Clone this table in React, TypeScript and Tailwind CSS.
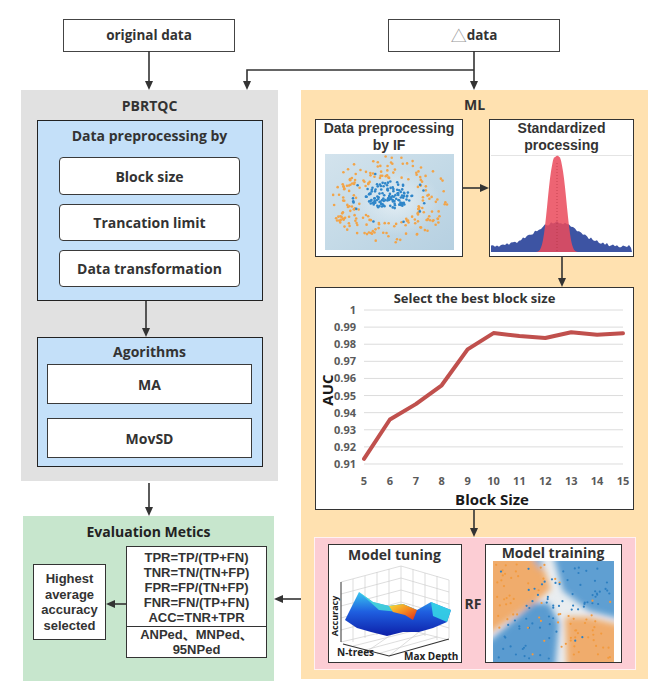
import React from "react";

function rng(seed: number) {
  let s = seed;
  return () => {
    s = (s + 0x6d2b79f5) | 0;
    let t = Math.imul(s ^ (s >>> 15), 1 | s);
    t = (t + Math.imul(t ^ (t >>> 7), 61 | t)) ^ t;
    return ((t ^ (t >>> 14)) >>> 0) / 4294967296;
  };
}

const font = "font-['Open_Sans','Noto_Sans','Noto_Sans_CJK_SC',sans-serif]";
const tight = "font-['Liberation_Sans','Noto_Sans_CJK_SC',sans-serif]";

// scatter plot of the isolation forest step
function ScatterIF() {
  const r = rng(11);
  const orange: number[][] = [];
  for (let i = 0; i < 200; i++) {
    const a = r() * Math.PI * 2;
    const rad = 0.5 + r() * 0.5;
    const x = 64 + Math.cos(a) * rad * 60;
    const y = 46 + Math.sin(a) * rad * 44;
    if (x > 2 && x < 127 && y > 2 && y < 94) orange.push([x, y]);
  }
  const blue: number[][] = [];
  for (let i = 0; i < 120; i++) {
    const a = r() * Math.PI * 2;
    const rad = Math.sqrt(r());
    blue.push([64 + Math.cos(a) * rad * 24, 41 + Math.sin(a) * rad * 14]);
  }
  for (let i = 0; i < 12; i++) {
    const a = r() * Math.PI * 2;
    blue.push([64 + Math.cos(a) * 36, 44 + Math.sin(a) * 26]);
  }
  return (
    <svg width="129" height="96" viewBox="0 0 129 96">
      <defs>
        <linearGradient id="ifbg" x1="0" y1="0" x2="1" y2="1">
          <stop offset="0" stopColor="#d3e3ed" />
          <stop offset="0.5" stopColor="#c4dae7" />
          <stop offset="1" stopColor="#b6d0e1" />
        </linearGradient>
        <radialGradient id="ifhl" cx="0.55" cy="0.5" r="0.35">
          <stop offset="0" stopColor="#e6eff5" stopOpacity="0.9" />
          <stop offset="1" stopColor="#e6eff5" stopOpacity="0" />
        </radialGradient>
      </defs>
      <rect width="129" height="96" fill="url(#ifbg)" />
      <rect width="129" height="96" fill="url(#ifhl)" />
      {orange.map((p, i) => (
        <circle key={"o" + i} cx={p[0]} cy={p[1]} r="1.3" fill="#f2a449" />
      ))}
      {blue.map((p, i) => (
        <circle key={"b" + i} cx={p[0]} cy={p[1]} r="1.3" fill="#2f86c9" />
      ))}
    </svg>
  );
}

// overlapping distributions
function Distributions() {
  const r = rng(5);
  const w = 141;
  const base = 97;
  let blue = `M0 ${base}`;
  for (let x = 0; x <= w; x += 2) {
    const d = (x - 66) / 32;
    const h = 24 * Math.exp(-d * d) + 4 + r() * 3;
    blue += ` L${x} ${base - h}`;
  }
  blue += ` L${w} ${base} Z`;
  let red = `M44 ${base}`;
  for (let x = 44; x <= 88; x += 1) {
    const d = (x - 66) / 11;
    const h = 95 * Math.exp(-Math.pow(Math.abs(d), 3));
    red += ` L${x} ${base - h - (Math.abs(d) < 0.4 ? r() * 1.5 : 0)}`;
  }
  red += ` L88 ${base} Z`;
  return (
    <svg width="141" height="99" viewBox="0 0 141 99">
      <line x1="0" y1="0.5" x2="141" y2="0.5" stroke="#e4e4e4" />
      <path d={blue} fill="#3d54a3" />
      <path d={red} fill="#ea4a5c" fillOpacity="0.86" />
      <line x1="66" y1="8" x2="66" y2="97" stroke="#b0303d" strokeWidth="0.6" strokeDasharray="1 2" />
    </svg>
  );
}

// AUC line chart
function AucChart() {
  const vals = [0.913, 0.936, 0.945, 0.956, 0.977, 0.9865, 0.9848, 0.9836, 0.987, 0.9856, 0.9864];
  const x0 = 48;
  const x1 = 307;
  const yAt = (v: number) => 21 + (1 - v) * 1711;
  const xAt = (i: number) => x0 + (i * (x1 - x0)) / 10;
  const ticks = [1, 0.99, 0.98, 0.97, 0.96, 0.95, 0.94, 0.93, 0.92, 0.91];
  const pts = vals.map((v, i) => `${xAt(i)},${yAt(v)}`).join(" ");
  return (
    <svg width="316" height="220" viewBox="0 0 316 220" className="absolute left-0 top-0">
      {ticks.map((t) => (
        <g key={t}>
          <line x1={x0} x2={x1} y1={yAt(t)} y2={yAt(t)} stroke="#dcdcdc" strokeWidth="1" />
          <text x="40" y={yAt(t) + 4} textAnchor="end" fontSize="11" fontWeight="700" fill="#5a5a5a" fontFamily="Open Sans, sans-serif">
            {t === 1 ? "1" : t.toFixed(2)}
          </text>
        </g>
      ))}
      {vals.map((_, i) => (
        <text key={i} x={xAt(i)} y="196" textAnchor="middle" fontSize="11" fontWeight="700" fill="#5a5a5a" fontFamily="Open Sans, sans-serif">
          {i + 5}
        </text>
      ))}
      <polyline points={pts} fill="none" stroke="#c0504d" strokeWidth="4" strokeLinejoin="round" strokeLinecap="round" />
      <text x="176" y="216" textAnchor="middle" fontSize="15" fontWeight="700" fill="#1a1a1a" fontFamily="Open Sans, sans-serif">
        Block Size
      </text>
      <text x="0" y="0" transform="translate(17 101) rotate(-90)" textAnchor="middle" fontSize="15" fontWeight="700" fill="#1a1a1a" fontFamily="Open Sans, sans-serif">
        AUC
      </text>
    </svg>
  );
}

// 3D surface of the grid search
function TuningSurface() {
  return (
    <svg width="132" height="98" viewBox="0 0 132 98">
      <defs>
        <linearGradient id="surf" x1="0" y1="0" x2="0" y2="1">
          <stop offset="0" stopColor="#39c6f0" />
          <stop offset="0.45" stopColor="#1f5fe0" />
          <stop offset="1" stopColor="#0d1fa8" />
        </linearGradient>
        <linearGradient id="hot" x1="0" y1="0" x2="1" y2="1">
          <stop offset="0" stopColor="#f5e23a" />
          <stop offset="0.5" stopColor="#f58a20" />
          <stop offset="1" stopColor="#e02a1c" />
        </linearGradient>
      </defs>
      <g stroke="#cfcfcf" strokeWidth="0.7" fill="none">
        <polyline points="12,18 72,2 120,16" />
        <polyline points="12,30 72,14 120,28" />
        <polyline points="12,42 72,26 120,40" />
        <polyline points="12,54 72,38 120,52" />
        <polyline points="12,66 72,50 120,64" />
        <line x1="24" y1="15" x2="24" y2="78" />
        <line x1="36" y1="12" x2="36" y2="74" />
        <line x1="48" y1="8" x2="48" y2="71" />
        <line x1="60" y1="5" x2="60" y2="68" />
        <line x1="72" y1="2" x2="72" y2="64" />
        <line x1="84" y1="5" x2="84" y2="68" />
        <line x1="96" y1="9" x2="96" y2="72" />
        <line x1="108" y1="12" x2="108" y2="76" />
        <line x1="120" y1="16" x2="120" y2="74" />
        <polyline points="12,78 72,64 120,76" />
        <line x1="24" y1="82" x2="84" y2="67" />
        <line x1="36" y1="86" x2="96" y2="70" />
        <line x1="48" y1="90" x2="108" y2="73" />
        <line x1="72" y1="64" x2="40" y2="86" />
        <line x1="90" y1="68" x2="60" y2="92" />
      </g>
      <line x1="12" y1="18" x2="12" y2="78" stroke="#333" strokeWidth="1" />
      <polyline points="14,80 60,92 120,75" fill="none" stroke="#333" strokeWidth="1.2" />
      <path d="M16 56 L30 28 L44 38 L60 42 L74 40 L88 46 L102 38 L122 46 L118 58 L104 64 L90 68 L74 68 L58 72 L42 68 L28 64 Z" fill="url(#surf)" />
      <path d="M30 28 L44 38 L60 42 L74 40 L88 46 L70 48 L50 46 Z" fill="#49e0d8" opacity="0.8" />
      <path d="M60 42 L74 40 L88 46 L84 56 L76 51 L64 48 Z" fill="url(#hot)" />
      <path d="M102 38 L122 46 L118 58 L104 52 Z" fill="#35d5e6" opacity="0.9" />
      <text x="0" y="0" transform="translate(9 52) rotate(-90)" textAnchor="middle" fontSize="9" fontWeight="700" fill="#222" fontFamily="Open Sans, sans-serif">
        Accuracy
      </text>
      <text x="8" y="92" fontSize="10" fontWeight="700" fill="#222" fontFamily="Open Sans, sans-serif">
        N-trees
      </text>
      <text x="75" y="96" fontSize="10" fontWeight="700" fill="#222" fontFamily="Open Sans, sans-serif">
        Max Depth
      </text>
    </svg>
  );
}

// random forest decision regions
function ForestRegions() {
  const r = rng(3);
  const dots: { x: number; y: number; c: string }[] = [];
  for (let i = 0; i < 150; i++) {
    const x = 3 + r() * 115;
    const y = 3 + r() * 95;
    const tl = y < 72 - 0.9 * x && x < 55;
    const br = x > 65 && y > 55 + (x - 95) * 0.3;
    const mix = r() < 0.15;
    let c = tl || br ? "#f29a3e" : "#2d7fc1";
    if (mix) c = c === "#2d7fc1" ? "#f29a3e" : "#2d7fc1";
    dots.push({ x, y, c });
  }
  return (
    <svg width="121" height="101" viewBox="0 0 121 101">
      <defs>
        <filter id="soft" x="-0.2" y="-0.2" width="1.4" height="1.4">
          <feGaussianBlur stdDeviation="3" />
        </filter>
        <clipPath id="rfclip">
          <rect width="121" height="101" />
        </clipPath>
      </defs>
      <g clipPath="url(#rfclip)">
        <rect width="121" height="101" fill="#e9edf0" />
        <g filter="url(#soft)">
          <polygon points="-6,-6 46,-6 58,28 46,38 -6,74" fill="#f0ac6c" />
          <polygon points="60,-6 127,-6 127,58 96,50 70,30" fill="#5f9fd2" />
          <polygon points="-6,82 40,42 56,42 66,62 62,107 -6,107" fill="#5a9bd0" />
          <polygon points="72,56 96,56 127,64 127,107 74,107" fill="#f0ac6c" />
          <polygon points="38,-6 50,-6 48,10" fill="#79b1da" />
        </g>
        {dots.map((d, i) => (
          <circle key={i} cx={d.x} cy={d.y} r="1.1" fill={d.c} />
        ))}
      </g>
    </svg>
  );
}

function Arrows() {
  const c = "#333";
  const down = (x: number, y: number) => `${x - 4},${y - 9} ${x + 4},${y - 9} ${x},${y}`;
  const right = (x: number, y: number) => `${x - 9},${y - 4} ${x - 9},${y + 4} ${x},${y}`;
  const left = (x: number, y: number) => `${x + 9},${y - 4} ${x + 9},${y + 4} ${x},${y}`;
  return (
    <svg width="669" height="700" className="absolute left-0 top-0 pointer-events-none z-10">
      <g stroke={c} strokeWidth="1.6" fill="none">
        <line x1="149" y1="51" x2="149" y2="82" />
        <line x1="474" y1="51" x2="474" y2="82" />
        <polyline points="474,70 247,70 247,82" />
        <line x1="146" y1="301" x2="146" y2="329" />
        <line x1="149" y1="483" x2="149" y2="508" />
        <line x1="463" y1="188" x2="481" y2="188" />
        <line x1="562" y1="257" x2="562" y2="279" />
        <line x1="474" y1="510" x2="474" y2="529" />
        <line x1="301" y1="599" x2="282" y2="599" />
        <line x1="126" y1="604" x2="114" y2="604" />
      </g>
      <g fill={c}>
        <polygon points={down(149, 90)} />
        <polygon points={down(474, 90)} />
        <polygon points={down(247, 90)} />
        <polygon points={down(146, 337)} />
        <polygon points={down(149, 516)} />
        <polygon points={right(489, 188)} />
        <polygon points={down(562, 287)} />
        <polygon points={down(474, 537)} />
        <polygon points={left(274, 599)} />
        <polygon points={left(106, 604)} />
      </g>
    </svg>
  );
}

export default function App() {
  const innerBox =
    "flex items-center justify-center bg-white border-[1.5px] border-[#3a3a3a] rounded-[4px] text-[14px] font-bold text-[#333]";
  const squareBox =
    "flex items-center justify-center bg-white border-[1.5px] border-[#3a3a3a] text-[14px] font-bold text-[#333]";
  return (
    <div className={`relative w-[669px] h-[700px] bg-white overflow-hidden ${font} text-[#262626]`}>
      {/* inputs */}
      <div className="absolute left-[63px] top-[19px] w-[172px] h-[33px] border-[1.5px] border-[#444] bg-white flex items-center justify-center text-[13.5px] font-bold text-[#333]">
        original data
      </div>
      <div className="absolute left-[388px] top-[19px] w-[172px] h-[33px] border-[1.5px] border-[#444] bg-white flex items-center justify-center text-[13.5px] font-bold text-[#333]">
        <span className="font-normal text-[#999] text-[16px] leading-none">△</span>data
      </div>

      {/* PBRTQC */}
      <div className="absolute left-[21px] top-[90px] w-[257px] h-[391px] bg-[#e1e1e1] flex flex-col items-center">
        <div className="h-[30px] flex items-center text-[14px] font-bold text-[#333]">PBRTQC</div>
        <div className="w-[226px] h-[181px] bg-[#c4e0f9] border-[1.5px] border-[#222] flex flex-col items-center">
          <div className="h-[28px] flex items-center text-[14px] font-bold text-[#333]">Data preprocessing by</div>
          <div className="flex flex-col gap-[9px] mt-[8px]">
            <div className={`${innerBox} w-[181px] h-[38px]`}>Block size</div>
            <div className={`${innerBox} w-[181px] h-[37px]`}>Trancation limit</div>
            <div className={`${innerBox} w-[181px] h-[37px]`}>Data transformation</div>
          </div>
        </div>
        <div className="mt-[36px] w-[226px] h-[130px] bg-[#c4e0f9] border-[1.5px] border-[#222] flex flex-col items-center">
          <div className="h-[26px] flex items-center text-[14px] font-bold text-[#333]">Agorithms</div>
          <div className="flex flex-col gap-[14px]">
            <div className={`${squareBox} w-[205px] h-[40px]`}>MA</div>
            <div className={`${squareBox} w-[205px] h-[40px]`}>MovSD</div>
          </div>
        </div>
      </div>

      {/* ML */}
      <div className="absolute left-[301px] top-[90px] w-[347px] h-[589px] bg-[#ffe1b0] flex flex-col items-center">
        <div className="h-[29px] flex items-center text-[14px] font-bold text-[#333]">ML</div>
        <div className="flex gap-[26px]">
          <div className="w-[148px] h-[138px] bg-white border-[1.5px] border-[#333] flex flex-col items-center">
            <div className={`${tight} text-[14px] font-bold leading-[17px] text-center text-[#333]`}>
              Data preprocessing
              <br />
              by IF
            </div>
            <div>
              <ScatterIF />
            </div>
          </div>
          <div className="w-[145px] h-[138px] bg-white border-[1.5px] border-[#333] flex flex-col items-center">
            <div className={`${tight} text-[14px] font-bold leading-[17px] text-center text-[#333]`}>
              Standardized
              <br />
              processing
            </div>
            <div className="mt-[1px]">
              <Distributions />
            </div>
          </div>
        </div>
        <div className="relative mt-[30px] w-[319px] h-[223px] bg-white border-[1.5px] border-[#333]">
          <div className="absolute left-0 right-0 top-[1px] text-center text-[13px] font-bold text-[#333]">
            Select the best block size
          </div>
          <div className="absolute left-0 top-[1px]">
            <AucChart />
          </div>
        </div>
        <div className="mt-[27px] w-[322px] h-[133px] bg-[#fccdd4] border border-[#fff1f3] flex items-center justify-between px-[13px]">
          <div className="w-[134px] h-[119px] bg-white border-[1.5px] border-[#333] flex flex-col items-center">
            <div className="text-[14px] font-bold text-[#333] leading-[18px] mt-[1px]">Model tuning</div>
            <TuningSurface />
          </div>
          <div className="text-[14px] font-bold text-[#333]">RF</div>
          <div className="w-[137px] h-[119px] bg-white border-[1.5px] border-[#333] flex flex-col items-center">
            <div className="text-[14px] font-bold text-[#333] leading-[16px]">Model training</div>
            <ForestRegions />
          </div>
        </div>
      </div>

      {/* evaluation */}
      <div className="absolute left-[23px] top-[516px] w-[251px] h-[165px] bg-[#c7e6cd] flex flex-col">
        <div className="h-[30px] flex items-center justify-center text-[14px] font-bold text-[#222]">Evaluation Metics</div>
        <div className={`flex items-center gap-[20px] pl-[10px] ${tight}`}>
          <div className="w-[73px] h-[76px] bg-white border-[1.5px] border-[#333] flex items-center justify-center text-center text-[13px] font-bold leading-[15.5px] text-[#333]">
            Highest
            <br />
            average
            <br />
            accuracy
            <br />
            selected
          </div>
          <div className="w-[141px] h-[112px] bg-white border-[1.5px] border-[#333] flex flex-col text-center text-[13px] font-bold text-[#333] leading-[15px]">
            <div className="h-[79px] flex flex-col justify-center pt-[2px]">
              <div>TPR=TP/(TP+FN)</div>
              <div>TNR=TN/(TN+FP)</div>
              <div>FPR=FP/(TN+FP)</div>
              <div>FNR=FN/(TP+FN)</div>
              <div>ACC=TNR+TPR</div>
            </div>
            <div className="flex-1 border-t-[1.5px] border-[#333] flex flex-col justify-center">
              <div>ANPed、MNPed、</div>
              <div>95NPed</div>
            </div>
          </div>
        </div>
      </div>

      <Arrows />
    </div>
  );
}
